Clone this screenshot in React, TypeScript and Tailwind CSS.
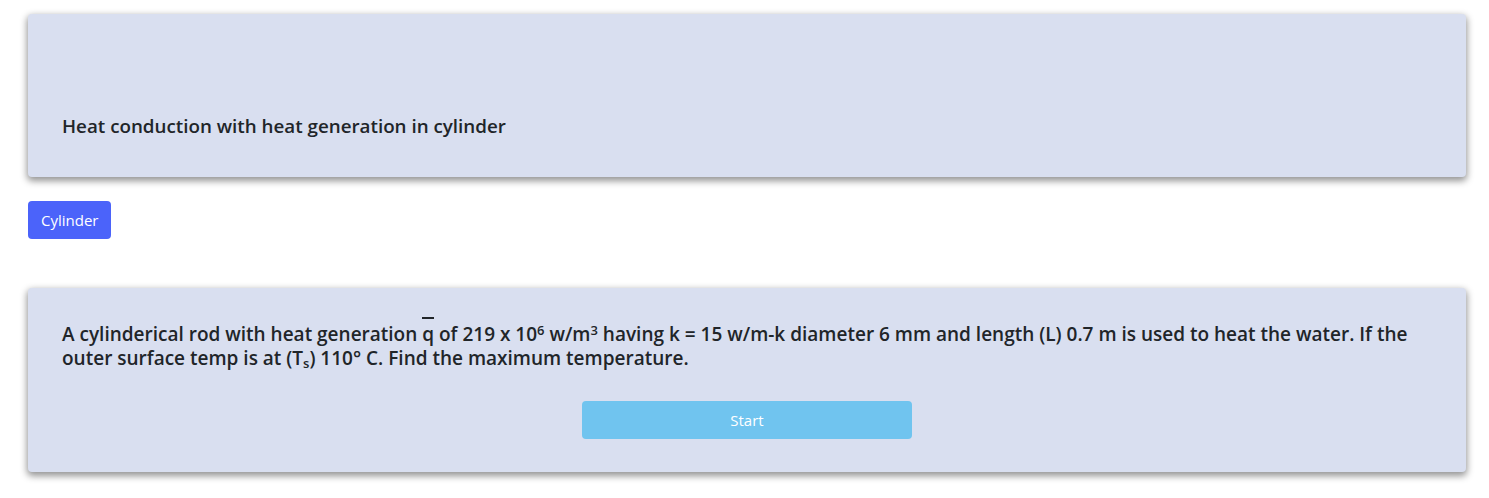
import React from 'react';

const font = { fontFamily: '"Open Sans", "Noto Sans", sans-serif' };

const Card = ({ className, children }: { className: string; children: React.ReactNode }) => (
  <div
    className={`bg-[#d9dff0] rounded-[4px] shadow-[0_3px_7px_1px_rgba(0,0,0,0.42)] ${className}`}
  >
    {children}
  </div>
);

const App = () => {
  return (
    <div className="min-h-screen bg-white pt-[14px] pl-[28px] pr-[23px] pb-6" style={font}>
      <Card className="pt-[98px] pb-[37px] px-[34px]">
        <h2 className="text-[18.8px] leading-[28px] font-semibold text-[#212529]">
          Heat conduction with heat generation in cylinder
        </h2>
      </Card>

      <div className="mt-[24px]">
        <button className="h-[38px] px-[13px] rounded-[4px] bg-[#4b63fa] text-white text-[15px]">
          Cylinder
        </button>
      </div>

      <Card className="mt-[49px] pt-[34px] pb-[33px] px-[34px]">
        <p className="text-[19px] leading-[24px] font-semibold text-[#212529]">
          A cylinderical rod with heat generation{' '}
          <span className="relative inline-block">
            q
            <span className="absolute left-0 right-0 -top-[5px] h-[2px] bg-[#212529]" />
          </span>{' '}
          of 219 x 10<sup className="text-[13px]">6</sup> w/m<sup className="text-[13px]">3</sup> having k = 15
          w/m-k diameter 6 mm and length (L) 0.7 m is used to heat the water. If the outer surface temp is at
          (T<sub className="text-[13px]">s</sub>) 110° C. Find the maximum temperature.
        </p>
        <div className="flex justify-center mt-[31px]">
          <button className="w-[330px] h-[38px] rounded-[4px] bg-[#70c4ef] text-white text-[15px]">
            Start
          </button>
        </div>
      </Card>
    </div>
  );
};

export default App;
